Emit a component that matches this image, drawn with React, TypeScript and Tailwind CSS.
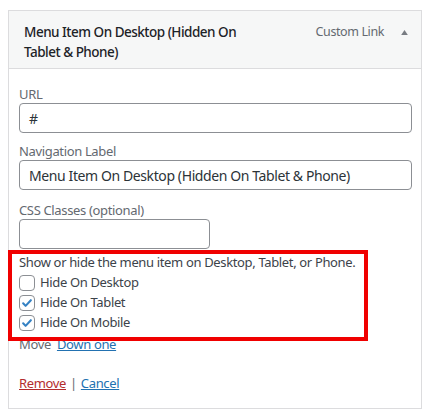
import React from 'react';

const FONT = { fontFamily: '"Noto Sans", "Open Sans", sans-serif' };

function Checkbox({ checked }: { checked: boolean }) {
  return (
    <span className="flex h-[16px] w-[16px] shrink-0 items-center justify-center rounded-[4px] border border-[#8c8f94] bg-white">
      {checked && (
        <svg viewBox="0 0 20 20" className="h-[16px] w-[16px]">
          <path d="M4.5 10.5l3.5 3.6L15.5 6" fill="none" stroke="#3582c4" strokeWidth="3" strokeLinecap="round" strokeLinejoin="round" />
        </svg>
      )}
    </span>
  );
}

const OPTIONS = [
  { label: 'Hide On Desktop', checked: false },
  { label: 'Hide On Tablet', checked: true },
  { label: 'Hide On Mobile', checked: true },
];

export default function App() {
  return (
    <div className="relative h-[417px] w-[430px] bg-white tracking-[-0.35px]" style={FONT}>
      <div className="ml-[8px] pt-[10px]">
        <div className="w-[414px] border border-[#dcdcde]">
          {/* Header */}
          <div className="flex h-[58px] items-start border-b border-[#dcdcde] bg-[#f6f7f7] pl-[15px] pr-[13px] pt-[11px]">
            <div className="w-[230px] text-[13.5px] font-medium leading-[20px] tracking-[-0.5px] text-[#1d2327]">
              Menu Item On Desktop (Hidden On Tablet &amp; Phone)
            </div>
            <div className="ml-auto flex h-[20px] items-center text-[12.5px] tracking-[-0.4px] text-[#646970]">
              <span>Custom Link</span>
              <svg viewBox="0 0 8 6" className="ml-[17px] h-[5px] w-[7px]">
                <path d="M0 6L4 0L8 6Z" fill="#787c82" />
              </svg>
            </div>
          </div>

          {/* Body */}
          <div className="px-[10px] pb-[14px] pt-[16px] text-[13px] text-[#50575e]">
            <div className="h-[18px] leading-[18px] text-[#646970]">URL</div>
            <div className="flex h-[30px] w-[393px] items-center rounded-[4px] border border-[#8c8f94] px-[9px] text-[14px] text-[#2c3338]">
              #
            </div>

            <div className="mt-[9px] h-[18px] leading-[18px] text-[#646970]">Navigation Label</div>
            <div className="flex h-[30px] w-[393px] items-center rounded-[4px] border border-[#8c8f94] px-[9px] text-[14px] tracking-[-0.4px] text-[#2c3338]">
              Menu Item On Desktop (Hidden On Tablet &amp; Phone)
            </div>

            <div className="mt-[11px] h-[18px] leading-[18px] text-[#646970]">CSS Classes (optional)</div>
            <div className="h-[30px] w-[191px] rounded-[4px] border border-[#8c8f94]" />

            <div className="mt-[4px] flex h-[20px] items-center text-[#3c434a]">
              Show or hide the menu item on Desktop, Tablet, or Phone.
            </div>
            {OPTIONS.map((o) => (
              <div key={o.label} className="flex h-[20px] items-center gap-[5px] text-[#3c434a]">
                <Checkbox checked={o.checked} />
                <span>{o.label}</span>
              </div>
            ))}

            <div className="mt-[2px] flex h-[20px] items-center gap-[6px]">
              <span className="text-[#646970]">Move</span>
              <a className="text-[#2271b1] underline">Down one</a>
            </div>

            <div className="mt-[19px] flex h-[20px] items-center gap-[4px]">
              <a className="text-[#b32d2e] underline">Remove</a>
              <span className="text-[#646970]">|</span>
              <a className="text-[#2271b1] underline">Cancel</a>
            </div>
          </div>
        </div>
      </div>

      {/* Red highlight annotation */}
      <div className="pointer-events-none absolute left-[8px] top-[250px] h-[91px] w-[360px] border-[4px] border-[#f00000]" />
    </div>
  );
}
